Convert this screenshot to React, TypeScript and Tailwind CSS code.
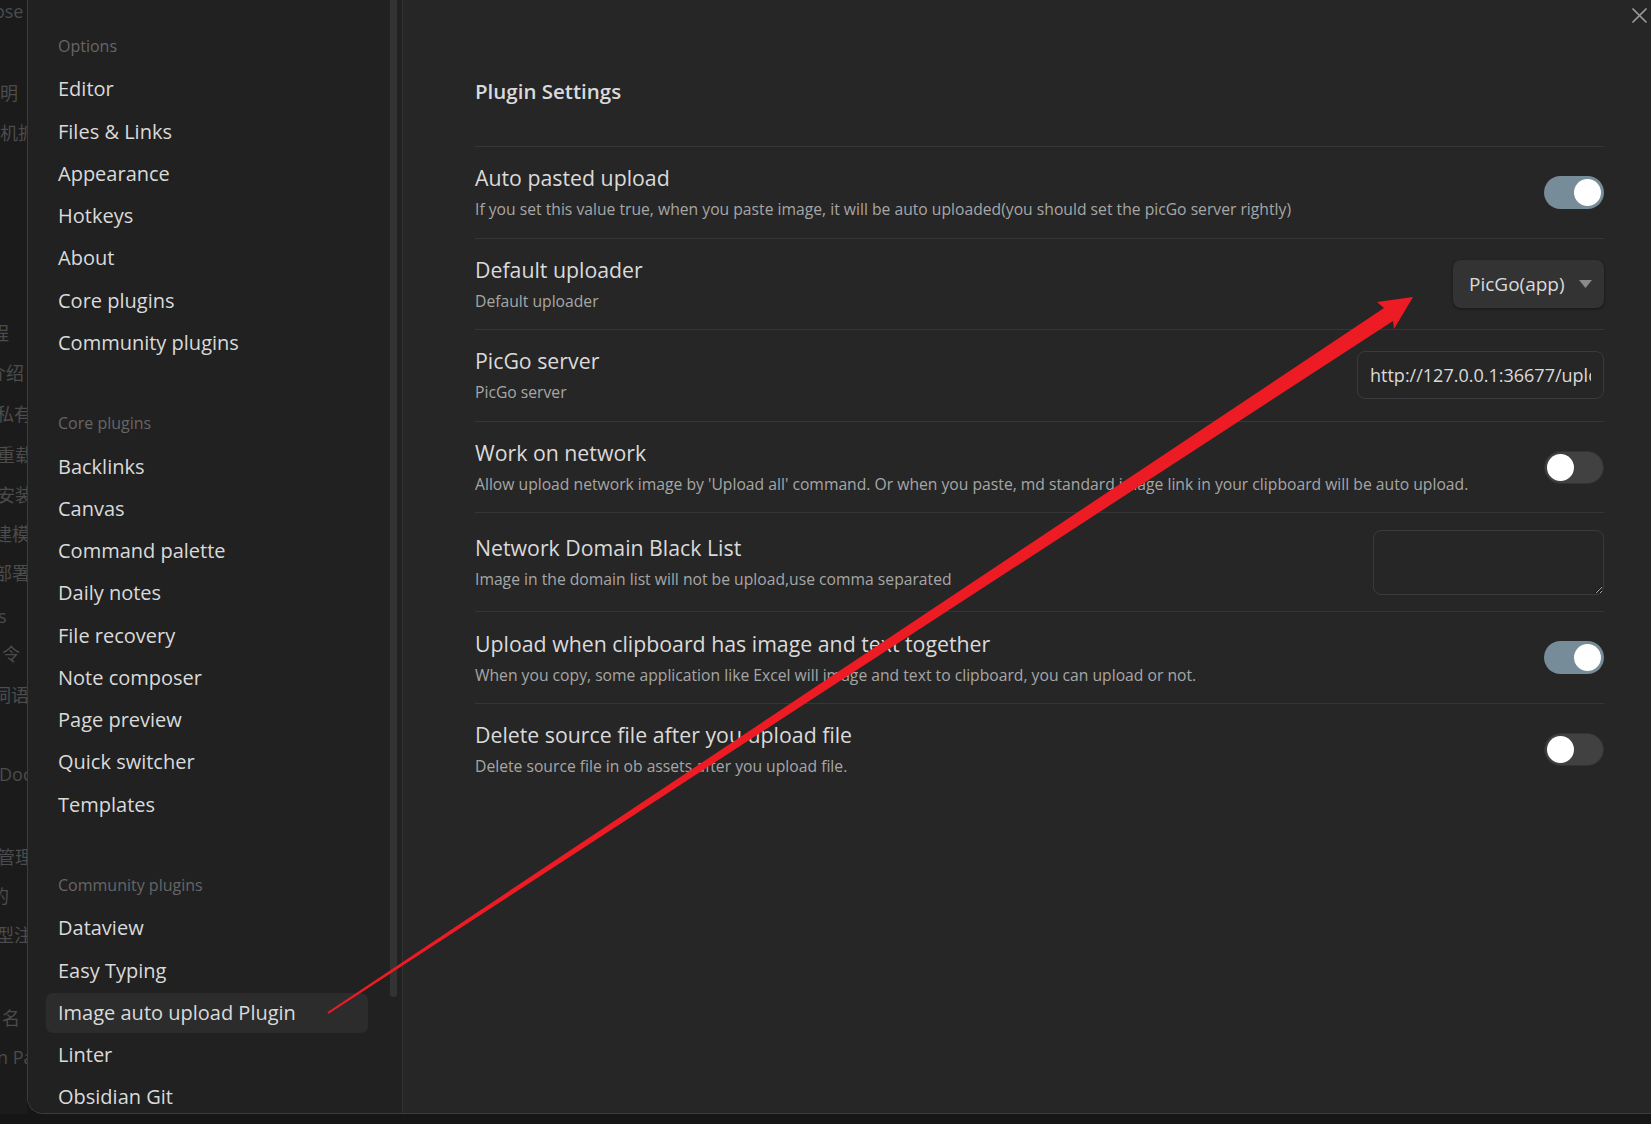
import React from "react";

const strip: { t: string; mt: string; ml: string }[] = [
  { t: "Close", mt: "mt-[-1px]", ml: "ml-[-22px]" },
  { t: "明", mt: "mt-[58px]", ml: "ml-[0px]" },
  { t: "机抓", mt: "mt-[16px]", ml: "ml-[0px]" },
  { t: "程", mt: "mt-[176px]", ml: "ml-[-9px]" },
  { t: "介绍", mt: "mt-[16px]", ml: "ml-[-12px]" },
  { t: "私有", mt: "mt-[17px]", ml: "ml-[-4px]" },
  { t: "重载", mt: "mt-[17px]", ml: "ml-[-3px]" },
  { t: "安装", mt: "mt-[16px]", ml: "ml-[-3px]" },
  { t: "建模", mt: "mt-[15px]", ml: "ml-[-6px]" },
  { t: "部署", mt: "mt-[15px]", ml: "ml-[-6px]" },
  { t: "s", mt: "mt-[19px]", ml: "ml-[-2px]" },
  { t: "令", mt: "mt-[14px]", ml: "ml-[2px]" },
  { t: "词语", mt: "mt-[17px]", ml: "ml-[-7px]" },
  { t: "Doc", mt: "mt-[55px]", ml: "ml-[-1px]" },
  { t: "管理", mt: "mt-[59px]", ml: "ml-[-3px]" },
  { t: "的", mt: "mt-[15px]", ml: "ml-[-9px]" },
  { t: "型注", mt: "mt-[15px]", ml: "ml-[-4px]" },
  { t: "名", mt: "mt-[59px]", ml: "ml-[2px]" },
  { t: "n Pa", mt: "mt-[15px]", ml: "ml-[-3px]" },
];

const groups: { title: string; items: string[] }[] = [
  {
    title: "Options",
    items: ["Editor", "Files & Links", "Appearance", "Hotkeys", "About", "Core plugins", "Community plugins"],
  },
  {
    title: "Core plugins",
    items: [
      "Backlinks",
      "Canvas",
      "Command palette",
      "Daily notes",
      "File recovery",
      "Note composer",
      "Page preview",
      "Quick switcher",
      "Templates",
    ],
  },
  {
    title: "Community plugins",
    items: ["Dataview", "Easy Typing", "Image auto upload Plugin", "Linter", "Obsidian Git"],
  },
];

function Toggle({ on }: { on: boolean }) {
  return on ? (
    <div className="w-[60px] h-[33px] rounded-full bg-[#768c99] flex items-center justify-end pr-[3px] shrink-0">
      <div className="w-[27px] h-[27px] rounded-full bg-white" />
    </div>
  ) : (
    <div className="w-[60px] h-[33px] rounded-full bg-[#414141] border border-[#333] flex items-center justify-start pl-[2px] shrink-0">
      <div className="w-[27px] h-[27px] rounded-full bg-white" />
    </div>
  );
}

function Row({
  name,
  desc,
  children,
  tall,
}: {
  name: string;
  desc: string;
  children: React.ReactNode;
  tall?: boolean;
}) {
  return (
    <div
      className={
        "border-t border-[#363636] flex items-center justify-between gap-6 " +
        (tall ? "py-[16.5px]" : "py-[15.3px]")
      }
    >
      <div className="flex flex-col min-w-0">
        <div className="text-[21.3px] leading-[31px] text-[#dadada]">{name}</div>
        <div className="text-[15.7px] leading-[26px] mt-[3px] text-[#a6a6a6]">{desc}</div>
      </div>
      {children}
    </div>
  );
}

export default function App() {
  return (
    <div
      className="w-[1651px] h-[1124px] bg-[#161616] relative overflow-hidden flex items-start"
      style={{ fontFamily: '"Open Sans", "Noto Sans", "Noto Sans CJK SC", sans-serif' }}
    >
      {/* dimmed background app */}
      <div className="w-[27px] h-[1114px] bg-[#1b1b1b] overflow-hidden flex flex-col shrink-0">
        {strip.map((s, i) => (
          <div
            key={i}
            className={`${s.mt} ${s.ml} h-[24px] leading-[24px] text-[18px] whitespace-nowrap text-[#4c4c4c]`}
          >
            {s.t}
          </div>
        ))}
      </div>

      {/* modal */}
      <div className="flex-1 h-[1114px] flex border-l border-b border-[#3c3c3c] rounded-bl-[16px] overflow-hidden">
        {/* sidebar */}
        <div className="w-[375px] h-full bg-[#212121] border-r border-[#333333] flex shrink-0">
          <div className="flex-1 pl-[18px] pt-[25px] flex flex-col gap-[39.5px]">
            {groups.map((g) => (
              <div key={g.title} className="flex flex-col gap-[2.25px]">
                <div className="h-[42px] flex items-center pl-[12px] text-[16px] text-[#666666]">{g.title}</div>
                {g.items.map((it) => (
                  <div
                    key={it}
                    className={
                      "w-[322px] h-[40px] flex items-center pl-[12px] text-[20px] text-[#dadada] rounded-[7px] " +
                      (it === "Image auto upload Plugin" ? "bg-[#2c2c2c]" : "")
                    }
                  >
                    {it}
                  </div>
                ))}
              </div>
            ))}
          </div>
          <div className="w-[12px] shrink-0 flex justify-start">
            <div className="w-[7px] h-[997px] rounded-b-full bg-[#333333]" />
          </div>
        </div>

        {/* content */}
        <div className="flex-1 h-full bg-[#262626] relative pl-[72px] pr-[47px] pt-[76px]">
          <button className="absolute right-[4px] top-[8px] w-[15px] h-[15px]">
            <svg width="15" height="15" viewBox="0 0 15 15">
              <path d="M1 1 L14 14 M14 1 L1 14" stroke="#9b9b9b" strokeWidth="1.7" strokeLinecap="round" />
            </svg>
          </button>

          <div className="text-[20.5px] leading-[30px] font-semibold text-[#dadada] mb-[40px]">Plugin Settings</div>

          <Row
            name="Auto pasted upload"
            desc="If you set this value true, when you paste image, it will be auto uploaded(you should set the picGo server rightly)"
          >
            <Toggle on />
          </Row>

          <Row name="Default uploader" desc="Default uploader">
            <div className="w-[151px] h-[48px] rounded-[8px] bg-[#333333] shadow-[0_1px_3px_rgba(0,0,0,0.45)] flex items-center justify-between pl-[16px] pr-[12px] shrink-0">
              <span className="text-[19px] text-[#dadada]">PicGo(app)</span>
              <svg width="13" height="8" viewBox="0 0 13 8">
                <path d="M0 0 H13 L6.5 8 Z" fill="#8a8a8a" />
              </svg>
            </div>
          </Row>

          <Row name="PicGo server" desc="PicGo server">
            <input
              readOnly
              value="http://127.0.0.1:36677/upload"
              className="w-[247px] h-[48px] rounded-[8px] border border-[#3a3a3a] bg-transparent px-[12px] text-[18px] text-[#dadada] outline-none shrink-0"
              style={{ fontFamily: '"Open Sans", sans-serif' }}
            />
          </Row>

          <Row
            name="Work on network"
            desc="Allow upload network image by 'Upload all' command. Or when you paste, md standard image link in your clipboard will be auto upload."
          >
            <Toggle on={false} />
          </Row>

          <Row name="Network Domain Black List" desc="Image in the domain list will not be upload,use comma separated" tall>
            <textarea className="w-[231px] h-[65px] rounded-[8px] border border-[#3a3a3a] bg-transparent outline-none shrink-0" />
          </Row>

          <Row
            name="Upload when clipboard has image and text together"
            desc="When you copy, some application like Excel will image and text to clipboard, you can upload or not."
          >
            <Toggle on />
          </Row>

          <Row name="Delete source file after you upload file" desc="Delete source file in ob assets after you upload file.">
            <Toggle on={false} />
          </Row>
        </div>
      </div>

      {/* annotation arrow */}
      <svg className="absolute left-0 top-0 pointer-events-none" width="1651" height="1124" viewBox="0 0 1651 1124">
        <polygon
          points="327.4,1012.2 1384,308 1377,302 1413,297 1394,329 1393,321 328.6,1013.8"
          fill="#ed1c24"
        />
      </svg>
    </div>
  );
}
